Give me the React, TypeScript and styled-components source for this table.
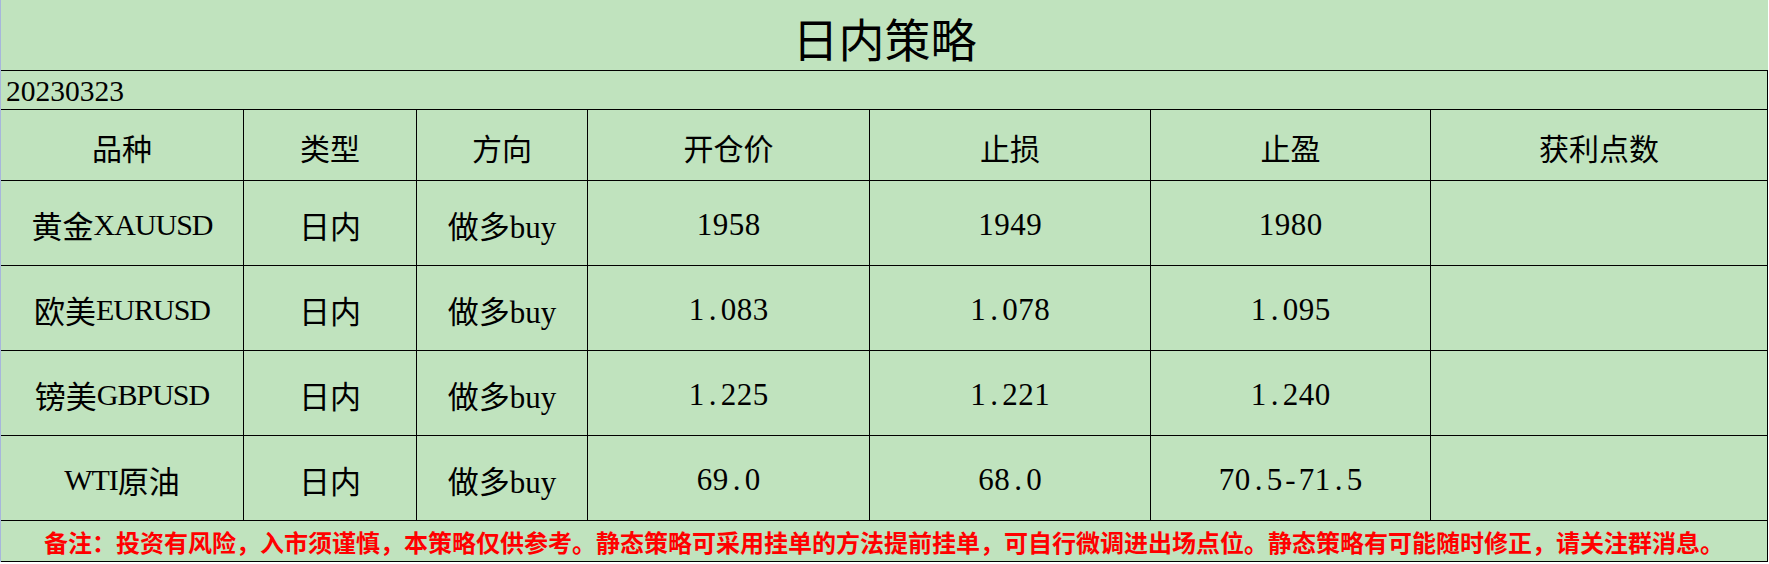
import React from 'react';
import styled, { createGlobalStyle } from 'styled-components';

const GlobalStyle = createGlobalStyle`
  html, body {
    margin: 0;
    padding: 0;
    background: #ffffff;
  }
  * {
    box-sizing: border-box;
  }
`;

const Page = styled.div`
  width: 1769px;
  border-left: 1px solid #a7b6dc;
`;

const Sheet = styled.div`
  display: grid;
  grid-template-columns: 243px 173px 171px 282px 281px 280px 337px;
  grid-template-rows: 71px 39px 71px 85px 85px 85px 85px 41px;
  background: #c0e3be;
  width: 1767px;
`;

const Title = styled.div`
  grid-column: 1 / -1;
  display: flex;
  align-items: center;
  justify-content: center;
  padding-top: 4px;
  border-bottom: 1px solid #000;
  font-family: 'Noto Sans CJK SC', sans-serif;
  font-size: 46px;
  color: #000;
`;

const DateRow = styled.div`
  grid-column: 1 / -1;
  display: flex;
  align-items: center;
  padding: 3px 0 0 5px;
  border-bottom: 1px solid #000;
  border-right: 1px solid #000;
  font-family: 'Liberation Serif', serif;
  font-size: 29.5px;
  color: #000;
`;

const Cell = styled.div<{ $head?: boolean }>`
  display: flex;
  align-items: center;
  justify-content: center;
  border-right: 1px solid #000;
  border-bottom: 1px solid #000;
  color: #000;
  white-space: nowrap;
  font-family: ${(p) =>
    p.$head
      ? "'Noto Sans CJK SC', sans-serif"
      : "'Liberation Serif', 'Noto Sans CJK SC', serif"};
  font-size: ${(p) => (p.$head ? '30px' : '31px')};
  padding-top: ${(p) => (p.$head ? '4px' : '3px')};
`;

// latin part of a symbol name, narrower like the sheet's half-width glyphs
const Latin = styled.span`
  font-size: 30px;
  letter-spacing: -1px;
`;

// half-width cell for each char of a price
const Half = styled.span`
  display: inline-block;
  width: 16px;
  text-align: center;
`;

const Note = styled.div`
  grid-column: 1 / -1;
  display: flex;
  align-items: center;
  justify-content: center;
  border-right: 1px solid #000;
  border-bottom: 1px solid #000;
  font-family: 'Noto Sans CJK SC', sans-serif;
  font-size: 24px;
  font-weight: 700;
  color: #ff0000;
  white-space: nowrap;
`;

const heads = ['品种', '类型', '方向', '开仓价', '止损', '止盈', '获利点数'];

const rows = [
  { cn: '黄金', en: 'XAUUSD', open: '1958', sl: '1949', tp: '1980' },
  { cn: '欧美', en: 'EURUSD', open: '1.083', sl: '1.078', tp: '1.095' },
  { cn: '镑美', en: 'GBPUSD', open: '1.225', sl: '1.221', tp: '1.240' },
  { en: 'WTI', cn: '原油', open: '69.0', sl: '68.0', tp: '70.5-71.5', lead: true },
];

function Price({ value }: { value: string }) {
  return (
    <span>
      {value.split('').map((c, i) => (
        <Half key={i}>{c}</Half>
      ))}
    </span>
  );
}

export default function App() {
  return (
    <Page>
      <GlobalStyle />
      <Sheet>
        <Title>日内策略</Title>
        <DateRow>20230323</DateRow>
        {heads.map((h) => (
          <Cell $head key={h}>
            {h}
          </Cell>
        ))}
        {rows.map((r) => (
          <React.Fragment key={r.en}>
            <Cell>
              {r.lead ? (
                <>
                  <Latin>{r.en}</Latin>
                  {r.cn}
                </>
              ) : (
                <>
                  {r.cn}
                  <Latin>{r.en}</Latin>
                </>
              )}
            </Cell>
            <Cell>日内</Cell>
            <Cell>做多buy</Cell>
            <Cell>
              <Price value={r.open} />
            </Cell>
            <Cell>
              <Price value={r.sl} />
            </Cell>
            <Cell>
              <Price value={r.tp} />
            </Cell>
            <Cell />
          </React.Fragment>
        ))}
        <Note>
          备注：投资有风险，入市须谨慎，本策略仅供参考。静态策略可采用挂单的方法提前挂单，可自行微调进出场点位。静态策略有可能随时修正，请关注群消息。
        </Note>
      </Sheet>
    </Page>
  );
}
